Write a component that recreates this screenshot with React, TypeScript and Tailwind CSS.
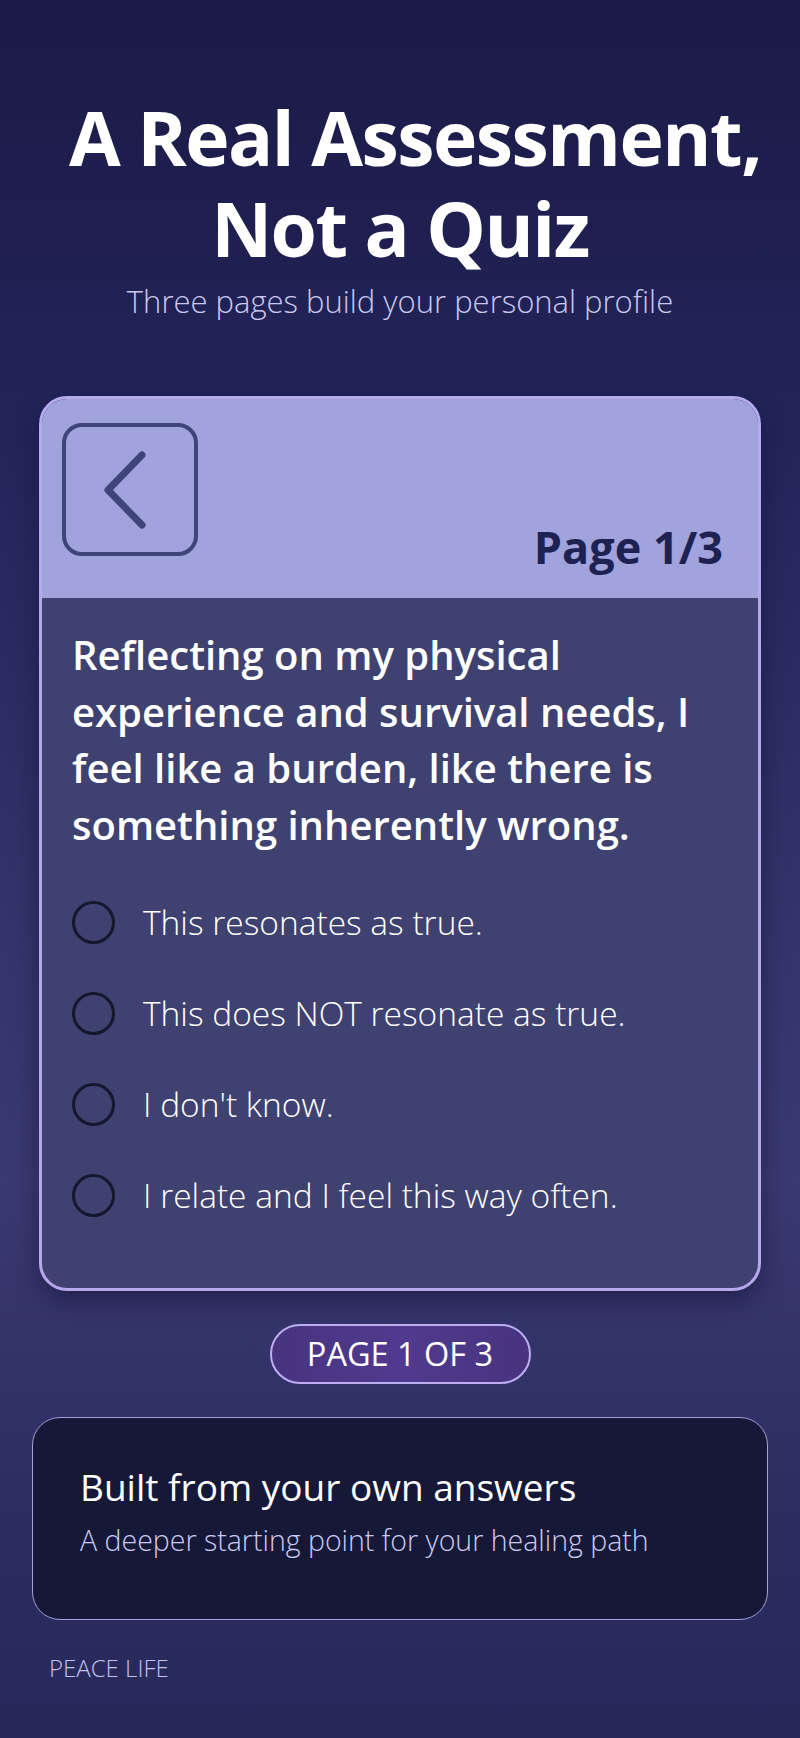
import React from "react";

const options = [
  "This resonates as true.",
  "This does NOT resonate as true.",
  "I don't know.",
  "I relate and I feel this way often.",
];

const BackButton: React.FC = () => (
  <button className="flex h-[133px] w-[136px] items-center justify-center rounded-[20px] border-4 border-[#404579]">
    <svg width="60" height="90" viewBox="0 0 60 90" fill="none" aria-hidden>
      <path
        d="M42 10 L 8 45 L 42 80"
        stroke="#404579"
        strokeWidth="7"
        strokeLinecap="round"
        strokeLinejoin="round"
      />
    </svg>
  </button>
);

export default function App() {
  return (
    <div
      className="min-h-[1738px] w-full bg-[linear-gradient(180deg,#1a1b46_0%,#23245a_25%,#34356c_55%,#3a3a72_68%,#2b2c60_88%,#27285a_100%)] text-white"
      style={{ fontFamily: '"Open Sans", "Noto Sans", sans-serif' }}
    >
      <div className="flex flex-col items-center pt-[92px]">
        <h1 className="text-center text-[75px] font-bold leading-[91px] tracking-[-0.02em]">
          <span className="block pl-[30px]">A Real Assessment,</span>
          <span className="block">Not a Quiz</span>
        </h1>
        <p className="mt-[12px] text-[31px] font-[350] leading-none text-[#c9c8f0]">
          Three pages build your personal profile
        </p>
      </div>

      <div className="mx-[39px] mt-[79px] overflow-hidden rounded-[28px] border-[3px] border-[#b5a9ee] bg-[#3f4270] shadow-[0_10px_24px_rgba(10,10,40,0.45)]">
        <div className="flex h-[199px] items-start justify-between bg-[#a0a3dc] pl-[20px] pr-[35px] pt-[24px]">
          <BackButton />
          <span className="mt-[101px] text-[45px] font-bold leading-none text-[#1e2252]">
            Page 1/3
          </span>
        </div>

        <div className="px-[30px] pb-[47px] pt-[29px]">
          <h2 className="text-[40px] font-semibold leading-[56.5px] text-white">
            Reflecting on my physical experience and survival needs, I feel like a
            burden, like there is something inherently wrong.
          </h2>
          <ul className="mt-[24px]">
            {options.map((o) => (
              <li key={o} className="flex h-[91px] items-center gap-[28px]">
                <span className="h-[43px] w-[43px] shrink-0 rounded-full border-[3.5px] border-[#15172e]" />
                <span className="text-[33.5px] font-[350] text-white">{o}</span>
              </li>
            ))}
          </ul>
        </div>
      </div>

      <div className="mt-[33px] flex justify-center">
        <span className="flex h-[60px] w-[261px] items-center justify-center rounded-full border-2 border-[#bdaef2] bg-[linear-gradient(90deg,#46347f,#523a8e,#46347f)] text-[32.5px] text-white">
          PAGE 1 OF 3
        </span>
      </div>

      <div className="mx-[32px] mt-[33px] h-[203px] rounded-[28px] border-[1.5px] border-[#a49fd6] bg-[#161838] px-[47px] pt-[47px]">
        <h3 className="text-[37px] font-medium leading-[44px] text-white">
          Built from your own answers
        </h3>
        <p className="mt-[10px] text-[28.5px] font-[350] text-[#cbcaf0]">
          A deeper starting point for your healing path
        </p>
      </div>

      <p className="ml-[49px] mt-[30px] text-[24px] font-[350] text-[#c3c2ee]">
        PEACE LIFE
      </p>
    </div>
  );
}
